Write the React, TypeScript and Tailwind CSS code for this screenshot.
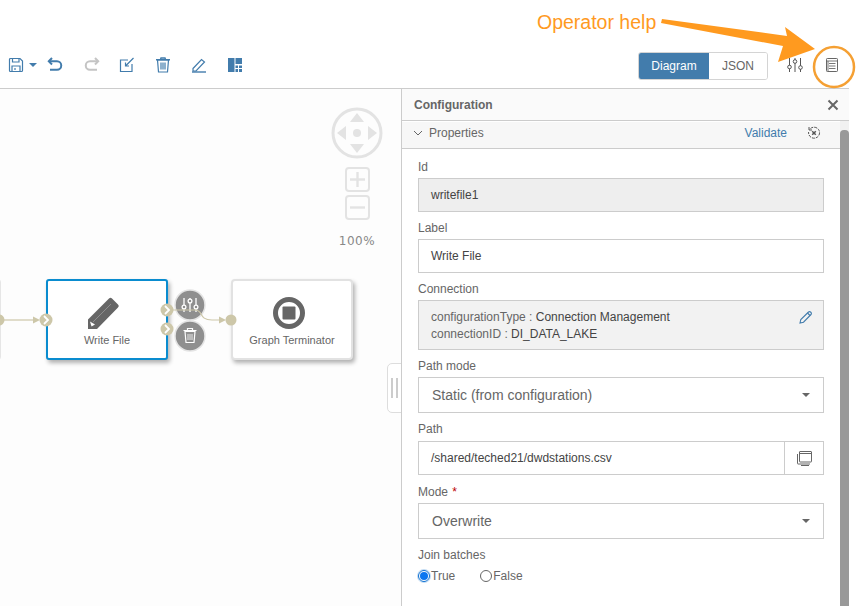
import React from "react";

const blue = "#427cac";

function ToolIcon({ children, w = 36 }: { children: React.ReactNode; w?: number }) {
  return (
    <div className="flex items-center justify-center h-[20px]" style={{ width: w }}>
      <svg width="16" height="16" viewBox="0 0 16 16" fill="none" stroke={blue} strokeWidth="1.2">
        {children}
      </svg>
    </div>
  );
}

function Chevron({ x, y }: { x: number; y: number }) {
  return (
    <g>
      <circle cx={x} cy={y} r="6.5" fill="#cdc7a9" />
      <path d={`M${x - 2} ${y - 4}L${x + 2} ${y}L${x - 2} ${y + 4}`} stroke="#fff" strokeWidth="1.8" fill="none" />
    </g>
  );
}

function Label({ children, className = "" }: { children: React.ReactNode; className?: string }) {
  return <div className={`text-[12px] leading-[14px] text-[#666] ${className}`}>{children}</div>;
}

function SelectBox({ value }: { value: string }) {
  return (
    <div className="h-[36px] border border-[#ccc] bg-white flex items-center justify-between pl-[13px] pr-[13px] text-[14px] text-[#666]">
      <span>{value}</span>
      <span className="w-0 h-0 border-l-[4px] border-r-[4px] border-t-[4px] border-l-transparent border-r-transparent border-t-[#666]" />
    </div>
  );
}

function Canvas() {
  return (
    <div className="relative w-[401px] h-[517px] bg-[#fdfdfd] overflow-hidden shrink-0">
      {/* navigator */}
      <svg className="absolute left-[330px] top-[18px]" width="54" height="114" viewBox="0 0 54 114" fill="none">
        <circle cx="27" cy="26" r="24" stroke="#e3e3e3" strokeWidth="3" fill="#fdfdfd" />
        <path d="M27 6l7 9H20zM27 46l-7-9h14zM7 26l9-7v14zM47 26l-9 7V19z" fill="#e3e3e3" />
        <circle cx="27" cy="26" r="4" fill="#e3e3e3" />
        <rect x="16" y="61" width="23" height="23" rx="3" stroke="#e3e3e3" strokeWidth="2" />
        <path d="M27.5 65v15M20 72.5h15" stroke="#e3e3e3" strokeWidth="2.4" />
        <rect x="16" y="89" width="23" height="23" rx="3" stroke="#e3e3e3" strokeWidth="2" />
        <path d="M20 100.5h15" stroke="#e3e3e3" strokeWidth="2.4" />
      </svg>
      <div className="absolute left-[337px] top-[144px] w-[40px] text-center text-[12px] leading-[16px] tracking-[0.5px] text-[#888] font-['DejaVu_Sans',sans-serif]">
        100%
      </div>

      {/* left cut-off node */}
      <div className="absolute left-[-10px] top-[190px] w-[11px] h-[81px] bg-white border border-[#e6e6e6] rounded-[3px]" />

      {/* Write File node */}
      <div className="absolute left-[46px] top-[190px] w-[122px] h-[81px] bg-white border-2 border-[#0a8ccf] rounded-[3px] shadow-[2px_3px_4px_rgba(0,0,0,0.3)] flex flex-col items-center">
        <svg className="mt-[15px] mr-[8px]" width="34" height="34" viewBox="0 0 34 34">
          <path d="M2 33V23.500L23 2.500a2 2 0 0 1 3 0l6 6a2 2 0 0 1 0 3L11 33z" fill="#666" />
          <path d="M7 26L25 8" stroke="#aaa" strokeWidth="0.6" />
          <path d="M4 25.500l5 3-3.500 2z" fill="#fff" />
        </svg>
        <div className="text-[11px] leading-[13px] mt-[4px] text-[#666]">Write File</div>
      </div>

      {/* Graph Terminator node */}
      <div className="absolute left-[231px] top-[190px] w-[122px] h-[81px] bg-white border-2 border-[#e2e2e2] rounded-[4px] shadow-[2px_3px_4px_rgba(0,0,0,0.3)] flex flex-col items-center">
        <svg className="mt-[15px] mr-[6px]" width="34" height="34" viewBox="0 0 34 34">
          <circle cx="17" cy="17" r="13.500" fill="none" stroke="#666" strokeWidth="5" />
          <rect x="10.500" y="10.500" width="13" height="13" rx="1" fill="#666" />
        </svg>
        <div className="text-[11px] leading-[13px] mt-[4px] text-[#666]">Graph Terminator</div>
      </div>

      {/* connectors, ports and action buttons */}
      <svg className="absolute left-0 top-0" width="401" height="320" viewBox="0 0 401 320" fill="none">
        <circle cx="-1" cy="231" r="5.500" fill="#cdc7a9" />
        <path d="M4 231H34" stroke="#cdc7a9" strokeWidth="1.200" />
        <path d="M33 227.500l7 3.500-7 3.500z" fill="#cdc7a9" />
        <Chevron x={46} y={231} />
        <circle cx="190" cy="216" r="15" fill="#8f8f8f" stroke="#e4e4e4" strokeWidth="1.500" />
        <circle cx="190" cy="247" r="15" fill="#8f8f8f" stroke="#e4e4e4" strokeWidth="1.500" />
        <g stroke="#fff" strokeWidth="1.300">
          <path d="M184 209v14M190 209v14M196 209v14" />
          <circle cx="184" cy="218" r="1.900" fill="#8f8f8f" />
          <circle cx="190" cy="212" r="1.900" fill="#8f8f8f" />
          <circle cx="196" cy="218" r="1.900" fill="#8f8f8f" />
        </g>
        <g stroke="#fff" strokeWidth="1.200">
          <path d="M183.500 241.500h13M187.500 241v-1.500h5v1.500" />
          <path d="M185 242.500l1 11h8l1-11z" />
          <path d="M188 245v6M190 245v6M192 245v6" strokeWidth="0.800" />
        </g>
        <path d="M171 221H195C204 221 198 231 212 231H224" stroke="#cdc7a9" strokeWidth="1.200" />
        <path d="M219 227.500l7 3.500-7 3.500z" fill="#cdc7a9" />
        <circle cx="231" cy="231" r="5.500" fill="#cdc7a9" />
        <Chevron x={167} y={221} />
        <Chevron x={167} y={240} />
      </svg>

      {/* resize handle */}
      <div className="absolute left-[387px] top-[274px] w-[15px] h-[50px] bg-white border border-[#ddd] rounded-l-[5px] flex items-center justify-center gap-[3px]">
        <span className="w-[2px] h-[20px] bg-[#ccc]" />
        <span className="w-[2px] h-[20px] bg-[#ccc]" />
      </div>
    </div>
  );
}

function Panel() {
  return (
    <div className="w-[448px] h-[517px] shrink-0 border-l border-[#ccc] bg-white flex flex-col">
      <div className="h-[32px] shrink-0 bg-[#fafafa] border-b border-[#ccc] flex items-center justify-between pl-[12px] pr-[10px]">
        <span className="text-[12px] font-bold text-[#666]">Configuration</span>
        <svg width="12" height="12" viewBox="0 0 12 12" stroke="#666" strokeWidth="2">
          <path d="M1.500 1.500l9 9M10.500 1.500l-9 9" />
        </svg>
      </div>
      <div className="flex flex-1 min-h-0">
        <div className="flex-1 min-w-0 pt-[1px]">
          <div className="h-[27px] bg-[#f7f7f7] border-b border-[#ccc] flex items-center pl-[11px] pr-[19px] pb-[5px]">
            <svg width="10" height="10" viewBox="0 0 10 10" fill="none" stroke="#666" strokeWidth="1">
              <path d="M1 3l4 4 4-4" />
            </svg>
            <span className="ml-[6px] text-[12px] text-[#666]">Properties</span>
            <span className="ml-auto text-[12px] text-[#427cac]">Validate</span>
            <svg className="ml-[20px]" width="14" height="14" viewBox="0 0 14 14" fill="none" stroke="#555" strokeWidth="1">
              <path d="M3.500 2.500A5.500 5.500 0 1 1 1.600 6" strokeDasharray="3 1" />
              <path d="M2 1v3h3" />
              <path d="M5.200 5.200l3.600 3.600M8.800 5.200l-3.600 3.600" strokeWidth="1.500" />
            </svg>
          </div>
          <div className="px-[16px] pt-[11px]">
            <Label>Id</Label>
            <div className="mt-[4px] h-[34px] border border-[#ccc] bg-[#eeeeee] flex items-center px-[12px] text-[12px] text-[#444]">
              writefile1
            </div>
            <Label className="mt-[9px]">Label</Label>
            <div className="mt-[4px] h-[34px] border border-[#ccc] bg-white flex items-center px-[12px] text-[12px] text-[#444]">
              Write File
            </div>
            <Label className="mt-[9px]">Connection</Label>
            <div className="mt-[4px] h-[50px] border border-[#ccc] bg-[#f2f2f2] flex items-center justify-between pl-[12px] pr-[11px] pt-[2px] text-[12px] leading-[17px]">
              <div>
                <div>
                  <span className="text-[#666]">configurationType : </span>
                  <span className="text-[#444]">Connection Management</span>
                </div>
                <div>
                  <span className="text-[#666]">connectionID : </span>
                  <span className="text-[#444]">DI_DATA_LAKE</span>
                </div>
              </div>
              <svg className="mb-[18px]" width="13" height="13" viewBox="0 0 13 13" fill="none" stroke={blue} strokeWidth="1.100">
                <path d="M1 12l.8-3.500L9.500 1a1.400 1.400 0 0 1 2 0l.5.500a1.400 1.400 0 0 1 0 2L4.500 11.200z" />
                <path d="M8.500 2l2.500 2.500" />
              </svg>
            </div>
            <Label className="mt-[9px]">Path mode</Label>
            <div className="mt-[4px]"><SelectBox value="Static (from configuration)" /></div>
            <Label className="mt-[9px]">Path</Label>
            <div className="mt-[5px] h-[34px] border border-[#ccc] bg-white flex text-[12px] text-[#444]">
              <div className="flex-1 flex items-center pl-[12px]">/shared/teched21/dwdstations.csv</div>
              <div className="w-[39px] border-l border-[#ccc] flex items-center justify-center">
                <svg width="15" height="15" viewBox="0 0 15 15" fill="none" stroke="#666" strokeWidth="1">
                  <rect x="2.500" y="0.500" width="12" height="10.500" rx="0.500" />
                  <path d="M0.500 3v9.500a.5.500 0 0 0 .5.500h12M4 14.500h8M2.500 2.500h12" />
                </svg>
              </div>
            </div>
            <Label className="mt-[10px]">
              Mode <span className="ml-[1px] text-[#bb0000]">*</span>
            </Label>
            <div className="mt-[4px]"><SelectBox value="Overwrite" /></div>
            <Label className="mt-[9px]">Join batches</Label>
            <div className="mt-[7px] flex items-center text-[12px] leading-[14px] text-[#666]">
              <span className="w-[12px] h-[12px] rounded-full border border-[#0a6ed1] flex items-center justify-center shadow-[0_0_0_1px_rgba(10,110,209,0.25)]">
                <span className="w-[8px] h-[8px] rounded-full bg-[#0a76f0]" />
              </span>
              <span className="ml-px">True</span>
              <span className="ml-[25px] w-[12px] h-[12px] rounded-full border border-[#666]" />
              <span className="ml-px">False</span>
            </div>
          </div>
        </div>
        <div className="w-[9px] shrink-0 bg-[#f1f1f1] pt-[9px]">
          <div className="w-[9px] h-full bg-[#999] rounded-t-[4px]" />
        </div>
      </div>
    </div>
  );
}

export default function App() {
  return (
    <div className="relative w-[857px] h-[606px] bg-white overflow-hidden font-['Liberation_Sans',Arial,sans-serif]">
      {/* toolbar */}
      <div className="h-[89px] w-[849px] border-b border-[#ccc] flex items-end">
        <div className="flex items-center h-[46px] pl-[7px]">
          <ToolIcon w={17}>
            <path d="M1.500 2.500a1 1 0 0 1 1-1h9.500l2.500 2.500v9.500a1 1 0 0 1-1 1h-11a1 1 0 0 1-1-1z" />
            <path d="M4.500 1.500v3.500h6.500v-3.500M4 14.500V9h8v5.500M7 11v2" />
          </ToolIcon>
          <span className="ml-[5px] w-0 h-0 border-l-[4px] border-r-[4px] border-t-[4px] border-l-transparent border-r-transparent border-t-[#427cac]" />
          <ToolIcon w={35}>
            <path d="M5 1L1.800 4.300 5 7.500" strokeWidth="2" />
            <path d="M2 4.300h8a4 4 0 0 1 0 8.500H3" strokeWidth="2" />
          </ToolIcon>
          <div className="w-[5px]" />
          <div className="w-[29px] flex items-center justify-center">
            <svg width="16" height="16" viewBox="0 0 16 16" fill="none" stroke="#c4c4c4" strokeWidth="2">
              <path d="M11 1l3.200 3.300L11 7.500" />
              <path d="M14 4.300H6a4 4 0 0 0 0 8.500h7" />
            </svg>
          </div>
          <ToolIcon w={41}>
            <path d="M9 3H1.500v11.500H13V7" />
            <path d="M14.500 1L7 8.500M6.500 5.500v3.500h3.500" />
          </ToolIcon>
          <ToolIcon w={31}>
            <path d="M1 2.800h14M5.500 2.500l.5-1.500h4l.5 1.500" strokeWidth="1.400" />
            <path d="M2.500 3l1 12h9l1-12z" />
            <path d="M6 5.500v7M8 5.500v7M10 5.500v7" />
          </ToolIcon>
          <ToolIcon w={41}>
            <path d="M2 11.500L10.500 2.500 13.500 5l-8.500 9H2z" />
            <path d="M1 15h14" strokeWidth="1.400" />
          </ToolIcon>
          <div className="w-[31px] flex items-center justify-center">
            <svg width="14" height="14" viewBox="0 0 14 14" fill={blue}>
              <path d="M0 0h6.500v14H0zM7.500 0H14v6H7.500zM7.500 7.500H10V10H7.500zM11 7.500h3V10h-3zM7.500 11H10v3H7.500zM11 11h3v3h-3z" />
            </svg>
          </div>
        </div>
        <div className="ml-auto flex items-start h-[36px] mr-[-3px]">
          <div className="flex h-[28px] rounded-[3px] overflow-hidden border border-[#d4d4d4] text-[12px]">
            <div className="w-[70px] bg-[#427cac] text-white flex items-center justify-center">Diagram</div>
            <div className="w-[58px] bg-white text-[#666] flex items-center justify-center">JSON</div>
          </div>
          <div className="ml-[8px] w-[37px] h-[26px] flex items-center justify-center">
            <svg width="16" height="16" viewBox="0 0 16 16" fill="none" stroke="#555" strokeWidth="1">
              <path d="M2.500 1v14M8 1v14M13.500 1v14" />
              <circle cx="2.500" cy="10" r="1.800" fill="#fff" />
              <circle cx="8" cy="4.500" r="1.800" fill="#fff" />
              <circle cx="13.500" cy="10.500" r="1.800" fill="#fff" />
            </svg>
          </div>
          <div className="w-[37px] h-[26px] flex items-center justify-center">
            <svg width="12" height="14" viewBox="0 0 12 14" fill="none" stroke="#666" strokeWidth="1">
              <rect x="0.500" y="0.500" width="11" height="13" rx="0.800" />
              <path d="M0.500 3h11M3 5.500h6.500M3 8h6.500M3 10.500h6.500M2 3v10" strokeWidth="0.900" />
            </svg>
          </div>
          <div className="w-[2px]" />
        </div>
      </div>

      <div className="flex w-[849px]">
        <Canvas />
        <Panel />
      </div>

      {/* annotation over the page */}
      <div className="absolute left-[537px] top-[10px] text-[19.5px] leading-[24px] text-[#ff9a1f]">
        Operator help
      </div>
      <svg className="absolute left-0 top-0 pointer-events-none" width="857" height="100" viewBox="0 0 857 100" fill="none">
        <path d="M662 19L787 36 785 27 815 49 778 62 783 46 661 23z" fill="#ff9a1f" />
        <circle cx="834" cy="67" r="20" stroke="#f5a033" strokeWidth="2.500" />
      </svg>
    </div>
  );
}
